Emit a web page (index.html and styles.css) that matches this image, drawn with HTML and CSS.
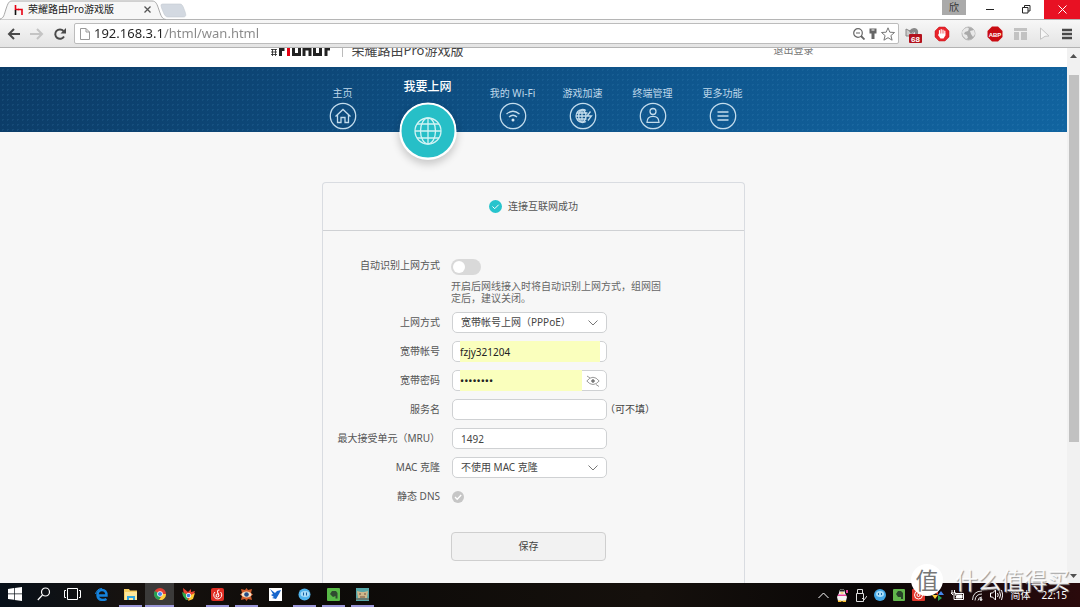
FILE: index.html
```html
<!DOCTYPE html>
<html lang="zh-CN">
<head>
<meta charset="utf-8">
<title>荣耀路由Pro游戏版</title>
<link rel="stylesheet" href="styles.css">
</head>
<body>
<div class="tabstrip">
  <svg class="tab-shape" viewBox="0 0 190 20" width="190" height="20" aria-hidden="true">
    <path d="M0 19 C4 18 4 15 6 9 C8 3 9 1 12 1 H152 C156 1 157 4 159 10 C161 16 162 19 166 19.500 L0 20Z" fill="#f7f7f7" stroke="#a9a9a9"/>
    <path d="M163 4 H180 C182 4 183 6 184 9 C186 14 187 17 183 17 H168 C165 17 164 14 162 9 C161 6 160 4 163 4Z" fill="#d3d9e1" stroke="#c3c9d0" stroke-width=".6"/>
    <path d="M15.500 5v4.500H19" fill="none" stroke="#e60012" stroke-width="1.600"/>
    <path d="M15.500 10v5" stroke="#111" stroke-width="1.600"/>
    <path d="M18 9.500H22v5.500" fill="none" stroke="#e60012" stroke-width="1.600"/>
  </svg>
  <div class="tab"><span class="tab-title">荣耀路由Pro游戏版</span>
    <button class="plain" type="button" aria-label="关闭标签页"><svg width="7" height="7" viewBox="0 0 7 7"><path d="M.5.5l6 6M6.500.5l-6 6" stroke="#555" stroke-width="1.300"/></svg></button>
  </div>
  <div class="window-buttons">
    <button class="win user" type="button">欣</button>
    <button class="win" type="button" aria-label="最小化"><svg width="9" height="9" viewBox="0 0 9 9"><path d="M0 4.500h8" stroke="#222"/></svg></button>
    <button class="win" type="button" aria-label="还原"><svg width="9" height="9" viewBox="0 0 9 9" fill="none" stroke="#222"><path d="M.5 2.500h5.500v5.500H.5zM2.500 2.500v-2H8v5.500H6"/></svg></button>
    <button class="win close" type="button" aria-label="关闭"><svg width="9" height="9" viewBox="0 0 9 9"><path d="M.5.5l8 8M8.500.5l-8 8" stroke="#fff"/></svg></button>
  </div>
</div>

<div class="toolbar">
  <button class="plain" type="button" aria-label="后退"><svg width="14" height="12" viewBox="0 0 14 12" fill="none" stroke="#4a4a4a" stroke-width="2"><path d="M13 6H2M7 1L2 6l5 5"/></svg></button>
  <button class="plain" type="button" aria-label="前进"><svg width="14" height="12" viewBox="0 0 14 12" fill="none" stroke="#c4c4c4" stroke-width="2"><path d="M0 6h11M7 1l5 5-5 5"/></svg></button>
  <button class="plain" type="button" aria-label="刷新"><svg width="14" height="14" viewBox="0 0 14 14"><path d="M11 9.500A4.700 4.700 0 1 1 10.500 4" fill="none" stroke="#4a4a4a" stroke-width="2"/><path d="M13 1v5.500H7.500z" fill="#4a4a4a"/></svg></button>
  <div class="omnibox">
    <svg width="10" height="12" viewBox="0 0 10 12" fill="#fff" stroke="#999"><path d="M.5.5H6l3.500 3.500v7.500h-9zM6 .5V4h3.500"/></svg>
    <input class="url" type="text" aria-label="地址" value="192.168.3.1/html/wan.html">
    <svg width="12" height="12" viewBox="0 0 12 12" fill="none" stroke="#666"><circle cx="5" cy="5" r="4.300" stroke-width="1.200"/><path d="M3 5h4"/><path d="M8 8l3.500 3.500" stroke-width="1.800"/></svg>
    <svg width="8" height="12" viewBox="0 0 8 12"><path d="M.5.5h7v5h-2V11h-3V5.500h-2z" fill="#666"/><path d="M2.500 2h3" stroke="#fff"/></svg>
    <svg width="14" height="14" viewBox="0 0 14 14" fill="#fff" stroke="#777"><path d="M7 .8l1.800 4.400 4.700.3-3.600 3.100 1.200 4.600L7 10.700l-4.100 2.500 1.200-4.600L.5 5.500l4.700-.3z"/></svg>
  </div>
  <div class="extensions">
    <svg width="18" height="18" viewBox="0 0 18 18"><path d="M1 4l4 2M1 4v7h5l3-4" fill="#ccc" stroke="#888"/><path d="M4 6q4-5 8-2 2 2 1 5h-3q0-3-2-2L6 9z" fill="#888"/><rect x="4" y="9" width="13" height="9" rx="1" fill="#b3121d"/><text class="badge-text" x="10.500" y="16.500">68</text></svg>
    <svg width="16" height="16" viewBox="0 0 16 16"><path d="M5 1h6l4 4v6l-4 4H5l-4-4V5z" fill="#e8242b" stroke="#c01018" stroke-width=".5"/><path d="M5.500 8V4.500M7.200 7.500v-4M9 7.500V4M10.800 8V5" stroke="#fff" stroke-width="1.200" stroke-linecap="round"/><path d="M5 7.500h6.400v2L9.500 12.500h-3L4 9z" fill="#fff"/></svg>
    <svg width="15" height="15" viewBox="0 0 15 15"><circle cx="7.500" cy="7.500" r="6.500" fill="#aaa" stroke="#b9b9b9"/><path d="M3 3l3-1.500 2 1-1 2.500-3 1-1 2 3 1 1 3-2 1-3-3-1-4zM9 5l4-1 1 4-2 3-2-3z" fill="#e8e8e8"/></svg>
    <svg width="16" height="16" viewBox="0 0 16 16"><path d="M5 .5h6L15.500 5v6L11 15.500H5L.5 11V5z" fill="#c90b12"/><text class="abp" x="8" y="10.500">ABP</text></svg>
    <svg width="14" height="14" viewBox="0 0 14 14" fill="#c2c2c2"><path d="M0 1h13v3H0zM0 5h5v8H0zM7 5h6v8H7z"/></svg>
    <svg width="12" height="14" viewBox="0 0 12 14" fill="#f7f7f7" stroke="#c4c4c4"><path d="M1.500 1l8.500 8-4 .3-4.500 3z"/></svg>
    <button class="plain" type="button" aria-label="菜单"><svg width="11" height="12" viewBox="0 0 11 12"><path d="M0 2h10M0 6h10M0 10h10" stroke="#484848" stroke-width="2.500"/></svg></button>
  </div>
</div>

<div class="viewport">
  <div class="page">
    <header class="site-header">
      <div class="brand">
        <svg width="60" height="9" viewBox="0 0 60 9" fill="none" stroke-width="3" stroke="#222"><path d="M1 1.500h6M1 4h6M2.500 1v7M5.500 1v7M1 6.500h6" stroke-width=".8"/><path d="M10.500 8V1.500h4"/><path d="M18.500 0v8" stroke="#e60012"/><path d="M23.500 0v6.500h6V0M34 8V0M34 1h6v7M44.500 0v6.500h6V0M56 8V1h4"/></svg>
        <h1 class="product">荣耀路由Pro游戏版</h1>
      </div>
      <a class="logout" href="#">退出登录</a>
    </header>

    <nav class="nav">
      <a class="nav-item" href="#"><span>主页</span><svg width="28" height="28" viewBox="0 0 28 28"><circle cx="14" cy="14" r="12.700"/><path d="M6.500 14.500L14 7.500l7.500 7M8.500 13v7.500h3.500v-5h4v5h3.500V13"/></svg></a>
      <a class="nav-item active" href="#"><span>我要上网</span>
        <svg class="globe" width="58" height="58" viewBox="0 0 58 58"><circle class="disc" cx="29" cy="29" r="27.500"/><circle cx="29" cy="29" r="13"/><ellipse cx="29" cy="29" rx="7.500" ry="13"/><path d="M29 16v26M16 29h26M18 22h22M18 36h22"/></svg></a>
      <a class="nav-item" href="#"><span>我的 Wi-Fi</span><svg width="28" height="28" viewBox="0 0 28 28"><circle cx="14" cy="14" r="12.700"/><path d="M7.500 12q6.500-5.500 13 0M10 15q4-3.500 8 0"/><circle class="dot" cx="14" cy="18" r="1.500"/></svg></a>
      <a class="nav-item" href="#"><span>游戏加速</span><svg width="28" height="28" viewBox="0 0 28 28"><circle cx="14" cy="14" r="12.700"/><path d="M17 8.500A6.500 6.500 0 1 0 17 19.500M13 7.500v13M6.500 14h11M7.500 11h11M7.500 17h10M12 8q-5 6 0 12M14 8q3 2 3 6t-3 6M21.500 9.500L18 14h4.500L19 18.500"/></svg></a>
      <a class="nav-item" href="#"><span>终端管理</span><svg width="28" height="28" viewBox="0 0 28 28"><circle cx="14" cy="14" r="12.700"/><circle cx="14" cy="9.500" r="3"/><path d="M8 20.300q0-6 6-6t6 6z"/></svg></a>
      <a class="nav-item" href="#"><span>更多功能</span><svg width="28" height="28" viewBox="0 0 28 28"><circle cx="14" cy="14" r="12.700"/><path d="M8.500 10h11M8.500 14h11M8.500 18h11"/></svg></a>
    </nav>

    <main class="card">
      <div class="status">
        <svg width="13" height="13" viewBox="0 0 13 13"><circle cx="6.500" cy="6.500" r="6.500" fill="#27c4cd"/><path d="M3.500 6.500l2.200 2.200 4-4" fill="none" stroke="#fff"/></svg>
        <span>连接互联网成功</span>
      </div>
      <form class="form">
        <div class="auto-row">
          <label for="auto">自动识别上网方式</label>
          <div class="auto-control"><input class="toggle" id="auto" type="checkbox"><p class="hint">开启后网线接入时将自动识别上网方式，组网固定后，建议关闭。</p></div>
        </div>
        <div class="row"><label for="mode">上网方式</label>
          <div class="field"><select id="mode"><option>宽带帐号上网（PPPoE）</option></select><svg class="chevron" width="10" height="6" viewBox="0 0 10 6"><path d="M.5.5L5 5 9.500.5"/></svg></div></div>
        <div class="row"><label for="account">宽带帐号</label>
          <div class="field filled"><input id="account" type="text" value="fzjy321204"></div></div>
        <div class="row"><label for="pass">宽带密码</label>
          <div class="field filled secret"><input id="pass" type="password" value="abcdefgh"><button class="plain" type="button" aria-label="显示密码"><svg width="14" height="12" viewBox="0 0 14 12" fill="none" stroke="#999"><path d="M.8 6Q7-1.500 13.200 6 7 13 .8 6zM1 1l3 2M10 9.500l3 2"/><circle cx="7" cy="6" r="1.300" fill="#777" stroke="#777"/></svg></button></div></div>
        <div class="row"><label for="service">服务名</label>
          <div class="field"><input id="service" type="text"></div><span class="note">（可不填）</span></div>
        <div class="row"><label for="mru">最大接受单元（MRU）</label>
          <div class="field"><input id="mru" type="text" value="1492"></div></div>
        <div class="row"><label for="mac">MAC 克隆</label>
          <div class="field"><select id="mac"><option>不使用 MAC 克隆</option></select><svg class="chevron" width="10" height="6" viewBox="0 0 10 6"><path d="M.5.5L5 5 9.500.5"/></svg></div></div>
        <div class="row"><label for="dns">静态 DNS</label>
          <div class="tick"><input id="dns" type="checkbox"><svg width="12" height="12" viewBox="0 0 12 12"><path d="M3 6l2.200 2.200 4-4.200" fill="none" stroke="#fff" stroke-width="1.300"/></svg></div></div>
        <button class="save" type="button">保存</button>
      </form>
    </main>
  </div>
  <div class="scrollbar">
    <svg width="7" height="4" viewBox="0 0 7 4"><path d="M0 4l3.500-4L7 4z" fill="#505050"/></svg>
    <div class="thumb"></div>
    <svg width="7" height="4" viewBox="0 0 7 4"><path d="M0 0l3.500 4L7 0z" fill="#505050"/></svg>
  </div>
</div>

<footer class="taskbar">
  <div class="apps">
    <button class="app" type="button" aria-label="开始"><svg width="14" height="14" viewBox="0 0 14 14" fill="#fff"><path d="M0 2l6-1v5.500H0zM6.700.9L14 0v6.500H6.700zM0 7.300h6v5.500L0 12zM6.700 7.300H14V14l-7.300-1z"/></svg></button>
    <button class="app" type="button" aria-label="搜索"><svg width="14" height="14" viewBox="0 0 14 14" fill="none" stroke="#fff" stroke-width="1.200"><circle cx="8.500" cy="5" r="4"/><path d="M5.500 8L.8 13"/></svg></button>
    <button class="app" type="button" aria-label="任务视图"><svg width="17" height="12" viewBox="0 0 17 12" fill="none" stroke="#fff"><path d="M3.500.5h10v11h-10zM2 2.500H.5v7H2M15 2.500h1.500v7H15"/></svg></button>
    <button class="app" type="button" aria-label="Edge"><svg width="13" height="13" viewBox="0 0 13 13"><path d="M2.500 7.500h9Q11.500 2 7 2 2.500 2 2.500 7.500 3 12 8 12q2 0 3.500-1" fill="none" stroke="#1583dd" stroke-width="2.400"/><path d="M.5 6Q2 .5 7 .5" stroke="#1583dd" fill="none"/></svg></button>
    <button class="app open" type="button" aria-label="文件资源管理器"><svg width="14" height="13" viewBox="0 0 14 13"><path d="M0 1h5l1 1.500h7V12H0z" fill="#f6cf62"/><path d="M1 4h12v8H1z" fill="#fce79b"/><path d="M3 12V8h8v4H9v-2H5v2z" fill="#2fa6df"/></svg></button>
    <button class="app open current" type="button" aria-label="Chrome"><svg width="12" height="12" viewBox="0 0 12 12"><circle cx="6" cy="6" r="6" fill="#e34133"/><path d="M6 6L.8 3A6 6 0 0 0 6 12z" fill="#25a055"/><path d="M6 6h6A6 6 0 0 1 5 12L8.500 7z" fill="#fbd03c"/><circle cx="6" cy="6" r="2.800" fill="#fff"/><circle cx="6" cy="6" r="2.100" fill="#4587ed"/></svg></button>
    <button class="app" type="button" aria-label="浏览器"><svg width="13" height="13" viewBox="0 0 13 13"><path d="M1 0l5 4 3-3v3l4-1-2 5-2 4H5L2 8z" fill="#e84532"/><path d="M0 4l4 2 2 6H4L1 8z" fill="#2cab4a"/><path d="M13 5l-2 6-5 2 3-6z" fill="#fbcb35"/><circle cx="6.500" cy="7.500" r="2.500" fill="#fff"/><circle cx="6.500" cy="7.500" r="1.800" fill="#3b7de2"/></svg></button>
    <button class="app open" type="button" aria-label="网易云音乐"><svg width="13" height="13" viewBox="0 0 13 13"><rect width="13" height="13" rx="2" fill="#e02e24"/><path d="M9.500 4A4 4 0 1 1 4 4M8.500 2Q6 1.500 6.500 4L8 8Q7 10 5 8.500 4.500 6 7.500 5.500" fill="none" stroke="#fff"/></svg></button>
    <button class="app open" type="button" aria-label="看图"><svg width="13" height="13" viewBox="0 0 13 13"><path d="M1 1l4 1 1.500-2L8 2l4-1-1 4 2 1.500L11 8l1 4-4-1-1.500 2L5 11l-4 1 1-4-2-1.500L2 5z" fill="#d05c2c"/><ellipse cx="6.500" cy="6.500" rx="5" ry="3" fill="#f4e4cb"/><circle cx="6.500" cy="6.500" r="2.300" fill="#234c86"/></svg></button>
    <button class="app" type="button" aria-label="迅雷"><svg width="13" height="13" viewBox="0 0 13 13"><rect width="13" height="13" fill="#fff"/><path d="M1 1l5 4 2-2 4-1-2 4-3 5-4-1 2-1-3-2 2-1z" fill="#1666cc"/></svg></button>
    <button class="app open" type="button" aria-label="旺旺"><svg width="13" height="13" viewBox="0 0 13 13"><circle cx="6.500" cy="6.500" r="6" fill="#50b4ed"/><ellipse cx="7" cy="6" rx="4.500" ry="3" fill="#a9dcf7"/><path d="M5.500 4.500v3M8.500 4.500v3" stroke="#155c9d"/></svg></button>
    <button class="app open" type="button" aria-label="印象笔记"><svg width="13" height="13" viewBox="0 0 13 13"><rect width="13" height="13" rx="1" fill="#58b947"/><path d="M5 3h4l1.500 2v5.500h-2V8L6 9 3 6z" fill="#304a31"/></svg></button>
    <button class="app open" type="button" aria-label="游戏"><svg width="13" height="13" viewBox="0 0 13 13"><rect width="13" height="13" fill="#57a7a8"/><path d="M1 3l4 1h3l4-1-1 7H2z" fill="#cfb88b"/><path d="M3 6h2M8 6h2M4 9h5M0 11h13" stroke="#74513f"/></svg></button>
  </div>
  <div class="tray">
    <svg width="11" height="7" viewBox="0 0 11 7" fill="none" stroke="#fff"><path d="M.5 6l5-5 5 5"/></svg>
    <svg width="12" height="13" viewBox="0 0 12 13"><path d="M3 4q0-4 3-4t3 4l2 4-1 4H2L1 8z" fill="#f5f5f5"/><path d="M3.500 1.500Q6-1 8.500 1.500v1h-5z" fill="#222"/><path d="M2 5.500h8V7H2zM10 1h2v3h-2z" fill="#e74099"/><path d="M4.500 3.500h3v1h-3zM2 11.500h3.500V13H2zM6.500 11.500H10V13H6.500z" fill="#f6bc27"/></svg>
    <svg width="12" height="13" viewBox="0 0 12 13" fill="none" stroke="#ddd"><path d="M2.500 4V.5h5V4M1.500 4.500h7v8h-7zM7 9l2 2 3-4"/></svg>
    <svg width="12" height="12" viewBox="0 0 12 12"><circle cx="6" cy="6" r="6" fill="#43a7e6"/><ellipse cx="6" cy="5" rx="4" ry="3" fill="#a9dcf7"/><path d="M4.500 4v2M7.500 4v2" stroke="#176baa"/></svg>
    <svg width="12" height="12" viewBox="0 0 12 12"><rect width="12" height="12" rx="1" fill="#62b64b"/><path d="M5 2h3l2 2v6H8V8L5 8 3 5z" fill="#284329"/></svg>
    <svg width="13" height="12" viewBox="0 0 13 12"><rect width="13" height="12" rx="1" fill="#e13429"/><circle cx="6.500" cy="6" r="4" fill="none" stroke="#fff"/><circle cx="6.500" cy="6" r="1.500" fill="none" stroke="#fff"/></svg>
    <svg width="12" height="12" viewBox="0 0 12 12"><path d="M6 0v6L2 3z" fill="#e34133"/><path d="M12 6H6l3-4z" fill="#4587ed"/><path d="M6 12V6l4 3z" fill="#28a657"/><path d="M0 6h6l-3 4z" fill="#fbc934"/></svg>
    <svg width="14" height="11" viewBox="0 0 14 11" fill="none" stroke="#fff"><path d="M4 3.500h8.500v6H3V6M1 0v3M3.500 0v3M0 3h5v2H2z"/><path d="M6 5h5v3H5z" fill="#fff"/></svg>
    <svg width="11" height="11" viewBox="0 0 11 11" fill="none" stroke="#ddd"><path d="M.5 10Q1 1 10 1M3 10.500Q3.500 4 10 4M6 10.500Q6.500 7 10 7"/><circle cx="9" cy="9.500" r="1" fill="#fff"/></svg>
    <svg width="13" height="12" viewBox="0 0 13 12" fill="none" stroke="#fff"><path d="M.5 4h2L5.500 1v10L2.500 8h-2zM7.500 4q1.500 2 0 4M9.500 2.500q2 3.500 0 7M11.500 1q2.500 5 0 10"/></svg>
    <span>简体</span>
    <time class="clock">22:15</time>
  </div>
</footer>
<div class="watermark"><span class="seal">值</span><span>什么值得买</span></div>
</body>
</html>
```

FILE: styles.css
```css
* { box-sizing: border-box; }
html, body { height: 100%; }
body {
  position: relative;
  display: flex;
  flex-direction: column;
  margin: 0;
  overflow: hidden;
  background: #f7f7f7;
  color: #555;
  font: 10px/13px "Noto Sans", "Noto Sans CJK SC", sans-serif;
}
button, input, select { margin: 0; padding: 0; font: inherit; color: inherit; }
svg { display: block; flex: none; }
.plain { display: flex; padding: 0; border: 0; background: none; }

/* Browser frame */
.tabstrip { position: relative; flex: none; display: flex; justify-content: space-between; height: 20px; background: #fff; border-bottom: 1px solid #b5b5b5; }
.tab-shape { position: absolute; left: 0; top: 0; }
.tab { position: relative; display: flex; align-items: center; justify-content: space-between; width: 151px; padding-left: 28px; color: #222; }
.window-buttons { display: flex; align-items: flex-start; }
.win { display: flex; align-items: center; justify-content: center; width: 36px; height: 19px; border: 0; background: none; }
.user { width: 24px; height: 15px; margin-right: 6px; background: #aaa; color: #333; }
.close { background: #e81123; }
.toolbar { flex: none; display: flex; align-items: center; gap: 9px; height: 28px; padding: 0 7px; background: linear-gradient(#f7f7f7, #e4e4e4); border-bottom: 1px solid #b3b3b3; }
.omnibox { flex: 1; display: flex; align-items: center; gap: 4px; height: 21px; margin-left: -2px; padding: 0 3px 0 5px; border: 1px solid #bcbcbc; border-radius: 2px; background: #fff; }
.url { flex: 1; min-width: 0; border: 0; outline: 0; font-size: 13px; line-height: 17px; color: transparent; background: linear-gradient(90deg, #222 70px, #888 70px); background-clip: text; -webkit-background-clip: text; }
.extensions { display: flex; align-items: center; gap: 11px; margin-left: -3px; }
.badge-text, .abp { fill: #fff; font-family: "Liberation Sans", sans-serif; font-size: 8px; font-weight: 700; text-anchor: middle; }
.abp { font-size: 6px; }

/* Page */
.viewport { flex: 1; min-height: 0; display: flex; overflow: hidden; }
.page { flex: 1; min-width: 0; display: flex; flex-direction: column; }
.site-header { flex: none; display: flex; align-items: flex-end; justify-content: center; gap: 310px; height: 19px; padding: 0 0 10px 16px; overflow: hidden; background: #fff; }
.brand { display: flex; align-items: flex-end; gap: 12px; }
.product { margin: 0; padding-left: 9px; border-left: 1px solid #bbb; color: #444; font-size: 13px; font-weight: 400; line-height: 14px; }
.logout { color: #777; text-decoration: none; }
.nav {
  flex: none;
  display: flex;
  justify-content: center;
  height: 65px;
  padding-right: 2px;
  background:
    radial-gradient(circle, rgba(90, 170, 220, .12) 1px, transparent 1px) 0 0 / 5px 5px,
    linear-gradient(170deg, rgba(0, 20, 50, .12), transparent),
    linear-gradient(100deg, #0d416e, #105b94 65%, #1164a0);
}
.nav-item { display: flex; flex-direction: column; align-items: center; gap: 2px; width: 70px; padding-top: 20px; color: #bfd8ea; text-decoration: none; }
.nav-item svg { fill: none; stroke: #c3dcec; stroke-width: 1.3; }
.nav-item .dot { fill: #d5e8f4; stroke: none; }
.active { width: 100px; padding-top: 12px; gap: 8px; color: #fff; font-size: 12px; font-weight: 500; line-height: 15px; }
.active .globe { z-index: 1; border-radius: 50%; stroke: #d2f3f4; box-shadow: 0 4px 8px rgba(0, 0, 0, .2); }
.globe .disc { fill: #27bfc7; stroke: #fff; stroke-width: 2; }

/* Settings card */
.card { flex: 1; align-self: center; width: 100%; max-width: 423px; margin-top: 50px; border: 1px solid #d9dce1; border-bottom: 0; border-radius: 4px 4px 0 0; }
.status { display: flex; align-items: center; justify-content: center; gap: 6px; height: 48px; border-bottom: 1px solid #cfd1d4; }
.form { display: flex; flex-direction: column; gap: 8px; padding-top: 28px; }
.auto-row, .row { display: grid; grid-template-columns: 117px 155px auto; column-gap: 12px; }
.auto-row { grid-template-columns: 117px 210px; column-gap: 11px; }
.row { align-items: center; height: 21px; }
.row label, .auto-row label { text-align: right; white-space: nowrap; }
.auto-control { display: flex; flex-direction: column; gap: 5px; }
.toggle { appearance: none; width: 30px; height: 16px; border-radius: 8px; background: #d9d9d9; }
.toggle::before { content: ""; display: block; width: 12px; height: 12px; margin: 2px; border-radius: 50%; background: #fff; }
.hint { margin: 0; color: #666; line-height: 12px; }
.field { display: flex; align-items: center; height: 21px; padding: 0 8px; border: 1px solid #cfd1d3; border-radius: 5px; background: #fff; color: #444; }
.field input, .field select { flex: 1; min-width: 0; height: 19px; border: 0; outline: 0; background: none; appearance: none; }
.field.filled { padding: 0 6px 0 7px; }
.field.filled input { height: 21px; background: #faffbd; color: #222; }
.field.secret input { font-size: 11px; }
.chevron { fill: none; stroke: #777; }
.secret { gap: 4px; }
.note { margin-left: -14px; color: #444; }
.tick { display: grid; width: 12px; height: 12px; }
.tick > * { grid-area: 1 / 1; }
.tick input { appearance: none; width: 12px; height: 12px; border-radius: 50%; background: #c6c6c6; }
.tick svg { pointer-events: none; }
.save { width: 155px; height: 29px; margin: 17px 0 0 128px; border: 1px solid #cfcfcf; border-radius: 4px; background: #f2f2f2; color: #444; }

.scrollbar { flex: none; display: flex; flex-direction: column; align-items: center; width: 13px; padding: 6px 0 5px; background: #f1f1f1; }
.thumb { width: 10px; height: 70%; margin: 17px 0 auto; background: #c1c1c1; }

/* Taskbar */
.taskbar { flex: none; display: flex; justify-content: space-between; height: 24px; background: linear-gradient(90deg, #071019, #17120f 12%, #0c0a08 30%, #15100c 60%, #0a0707 80%, #2a0a0c); color: #fff; }
.apps { display: flex; }
.app { display: flex; align-items: center; justify-content: center; width: 29px; border: 0; border-bottom: 2px solid transparent; background: none; }
.open { width: 23px; margin: 0 3px; border-color: #9a96d8; }
.current { width: 29px; margin: 0; background: #3b3a39; }
.tray { display: flex; align-items: center; gap: 7px; padding-right: 13px; }
.clock { margin-left: 4px; }
.watermark { position: absolute; right: 10px; bottom: 11px; display: flex; align-items: center; gap: 12px; color: rgba(255, 255, 255, .9); font-size: 23px; line-height: 32px; text-shadow: 1px 1px 1px #999; }
.seal { width: 32px; height: 32px; border-radius: 50%; background: #fff; color: #777; text-align: center; text-shadow: none; }
```
